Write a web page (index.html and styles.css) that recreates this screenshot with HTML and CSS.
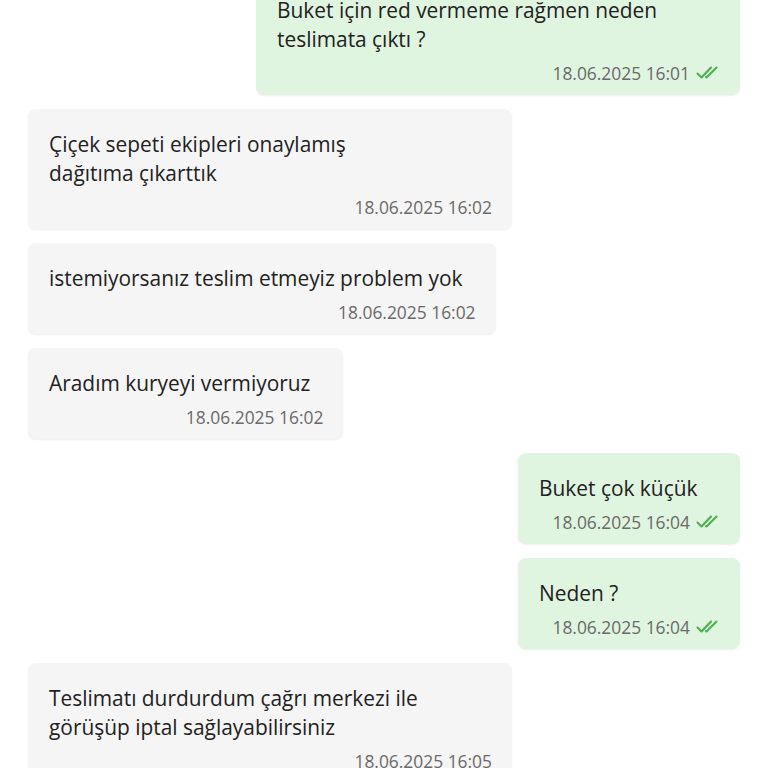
FILE: index.html
```html
<!DOCTYPE html>
<html lang="tr">
<head>
<meta charset="utf-8">
<link rel="stylesheet" href="styles.css">
</head>
<body>
<div class="chat">
  <div class="msg out wide">
    <div class="text">Buket için red vermeme rağmen neden teslimata çıktı ?</div>
    <div class="meta"><span>18.06.2025 16:01</span><svg class="tick" viewBox="0 0 24 16"><path d="M1.5 8.5 L5.5 12.5 L15 2.5"/><path d="M10 12 L10.5 12.5 L20.5 2.5"/></svg></div>
  </div>
  <div class="msg in wide">
    <div class="text">Çiçek sepeti ekipleri onaylamış<br>dağıtıma çıkarttık</div>
    <div class="meta"><span>18.06.2025 16:02</span></div>
  </div>
  <div class="msg in">
    <div class="text">istemiyorsanız teslim etmeyiz problem yok</div>
    <div class="meta"><span>18.06.2025 16:02</span></div>
  </div>
  <div class="msg in">
    <div class="text">Aradım kuryeyi vermiyoruz</div>
    <div class="meta"><span>18.06.2025 16:02</span></div>
  </div>
  <div class="msg out fixed">
    <div class="text">Buket çok küçük</div>
    <div class="meta"><span>18.06.2025 16:04</span><svg class="tick" viewBox="0 0 24 16"><path d="M1.5 8.5 L5.5 12.5 L15 2.5"/><path d="M10 12 L10.5 12.5 L20.5 2.5"/></svg></div>
  </div>
  <div class="msg out fixed">
    <div class="text">Neden ?</div>
    <div class="meta"><span>18.06.2025 16:04</span><svg class="tick" viewBox="0 0 24 16"><path d="M1.5 8.5 L5.5 12.5 L15 2.5"/><path d="M10 12 L10.5 12.5 L20.5 2.5"/></svg></div>
  </div>
  <div class="msg in wide">
    <div class="text">Teslimatı durdurdum çağrı merkezi ile görüşüp iptal sağlayabilirsiniz</div>
    <div class="meta"><span>18.06.2025 16:05</span></div>
  </div>
</div>
</body>
</html>
```
FILE: styles.css
```css
html, body {
  margin: 0;
  padding: 0;
  background: #ffffff;
  height: 768px;
  overflow: hidden;
}
.chat {
  display: flex;
  flex-direction: column;
  gap: 14px;
  padding: 0 28px;
  margin-top: -25px;
  font-family: "Open Sans", "Noto Sans", sans-serif;
}
.msg {
  box-sizing: border-box;
  max-width: 484px;
  padding: 21px 20px 10px 21px;
  border-radius: 8px;
  box-shadow: 0 1px 2px rgba(0, 0, 0, 0.07);
}
.msg.wide {
  width: 484px;
}
.msg.fixed {
  width: 222px;
}
.msg.in {
  align-self: flex-start;
  background: #f5f5f5;
}
.msg.out {
  align-self: flex-end;
  background: #dff5df;
}
.text {
  font-size: 20.9px;
  line-height: 29px;
  color: #222222;
  padding-right: 13px;
}
.meta {
  display: flex;
  justify-content: flex-end;
  align-items: center;
  gap: 6px;
  margin-top: 7px;
  font-size: 17.4px;
  line-height: 24px;
  color: #6a6a6a;
}
.tick {
  width: 24px;
  height: 16px;
  fill: none;
  stroke: #4caf50;
  stroke-width: 2.1;
  stroke-linecap: round;
  stroke-linejoin: round;
}
```
